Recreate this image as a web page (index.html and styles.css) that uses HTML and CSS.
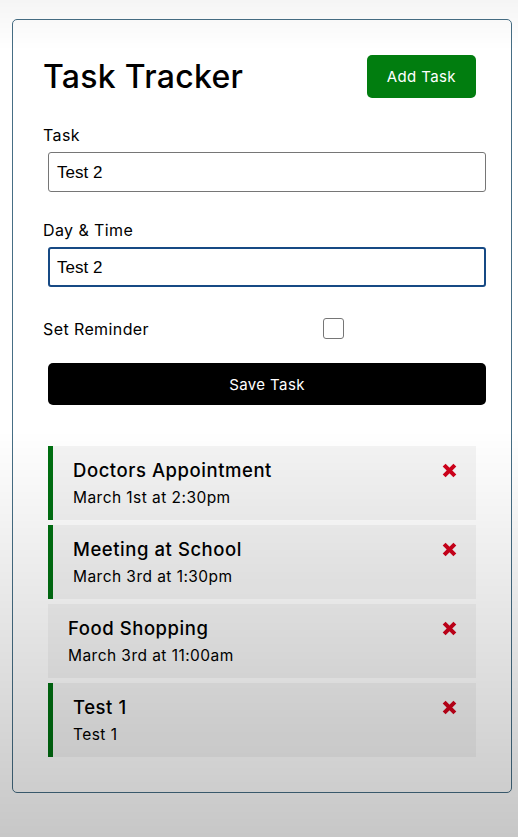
FILE: index.html
```html
<!DOCTYPE html>
<html>
<head>
<meta charset="utf-8">
<link rel="stylesheet" href="styles.css">
</head>
<body>
<div class="container">
  <header class="header">
    <h1>Task Tracker</h1>
    <button class="btn btn-green">Add Task</button>
  </header>
  <form class="add-form">
    <div class="form-control">
      <label>Task</label>
      <div class="input">Test 2</div>
    </div>
    <div class="form-control">
      <label>Day &amp; Time</label>
      <div class="input focus">Test 2</div>
    </div>
    <div class="form-control form-control-check">
      <label>Set Reminder</label>
      <span class="check"></span>
    </div>
    <button type="button" class="btn btn-block">Save Task</button>
  </form>
  <div class="tasks">
    <div class="task reminder">
      <h3>Doctors Appointment <svg class="x" viewBox="0 0 14 14"><path d="M2 2L12 12M12 2L2 12"/></svg></h3>
      <p>March 1st at 2:30pm</p>
    </div>
    <div class="task reminder">
      <h3>Meeting at School <svg class="x" viewBox="0 0 14 14"><path d="M2 2L12 12M12 2L2 12"/></svg></h3>
      <p>March 3rd at 1:30pm</p>
    </div>
    <div class="task">
      <h3>Food Shopping <svg class="x" viewBox="0 0 14 14"><path d="M2 2L12 12M12 2L2 12"/></svg></h3>
      <p>March 3rd at 11:00am</p>
    </div>
    <div class="task reminder">
      <h3>Test 1 <svg class="x" viewBox="0 0 14 14"><path d="M2 2L12 12M12 2L2 12"/></svg></h3>
      <p>Test 1</p>
    </div>
  </div>
</div>
<div class="shade"></div>
</body>
</html>
```
FILE: styles.css
```css
* { box-sizing: border-box; margin: 0; padding: 0; }
html, body { height: 100%; }
body {
  background: #fff;
  font-family: "Inter", "Noto Sans", sans-serif;
  color: #000;
  overflow: hidden;
  letter-spacing: 0.4px;
}
.container {
  width: 500px;
  margin: 19px 0 0 12px;
  min-height: 300px;
  border: 1px solid #466e85;
  padding: 30px;
  border-radius: 5px;
  background: #fff;
}
.header {
  display: flex;
  justify-content: space-between;
  align-items: center;
  margin-bottom: 20px;
}
.header h1 {
  font-size: 32px;
  font-weight: 500;
  letter-spacing: 0.3px;
}
.btn {
  display: inline-block;
  background: #000;
  color: #fff;
  border: none;
  padding: 10px 20px;
  margin: 5px;
  border-radius: 5px;
  font-size: 15px;
  line-height: 23px;
  font-family: inherit;
  letter-spacing: 0.4px;
}
.btn-green { background: #017d0f; }
.btn-block { display: block; width: 438px; height: 42px; margin: 5px; }
.form-control { margin: 20px 0; display: flex; flex-direction: column; align-items: flex-start; }
.form-control + .form-control { margin-top: 21px; }
.form-control label { display: block; font-size: 16px; line-height: 24px; }
.input {
  width: 438px;
  height: 40px;
  margin: 5px;
  padding: 0 8px;
  font-family: "Liberation Sans", Arial, sans-serif;
  font-size: 17px;
  line-height: 39px;
  letter-spacing: 0;
  border: 1px solid #767676;
  border-radius: 3px;
}
.input.focus { border: 2px solid #174a84; line-height: 37px; padding: 0 7px; }
.form-control-check {
  flex-direction: row;
  align-items: center;
  margin-bottom: 19px;
}
.form-control-check label { flex: 0 0 280px; }
.check {
  width: 21px;
  height: 21px;
  margin: 5px 0;
  border: 1px solid #767676;
  border-radius: 3px;
  background: #fff;
}
.add-form { margin-bottom: 41px; }
.task {
  background: #f4f4f4;
  margin: 5px;
  padding: 10px 20px;
  height: 74px;
}
.task.reminder { border-left: 5px solid #007012; }
.task h3 {
  display: flex;
  align-items: center;
  justify-content: space-between;
  font-size: 18.5px;
  font-weight: 500;
  line-height: 28px;
  letter-spacing: 0.55px;
}
.task p { font-size: 15.5px; line-height: 27px; letter-spacing: 0.45px; }
.x { width: 15px; height: 15px; margin-right: -1px; }
.x path { stroke: #d0021b; stroke-width: 3.8; stroke-linecap: butt; fill: none; }
.shade {
  position: fixed;
  inset: 0;
  pointer-events: none;
  background: linear-gradient(to bottom, rgba(0,0,0,0.04) 0, rgba(0,0,0,0) 50px, rgba(0,0,0,0) 430px, rgba(0,0,0,0.22) 100%);
}
```
